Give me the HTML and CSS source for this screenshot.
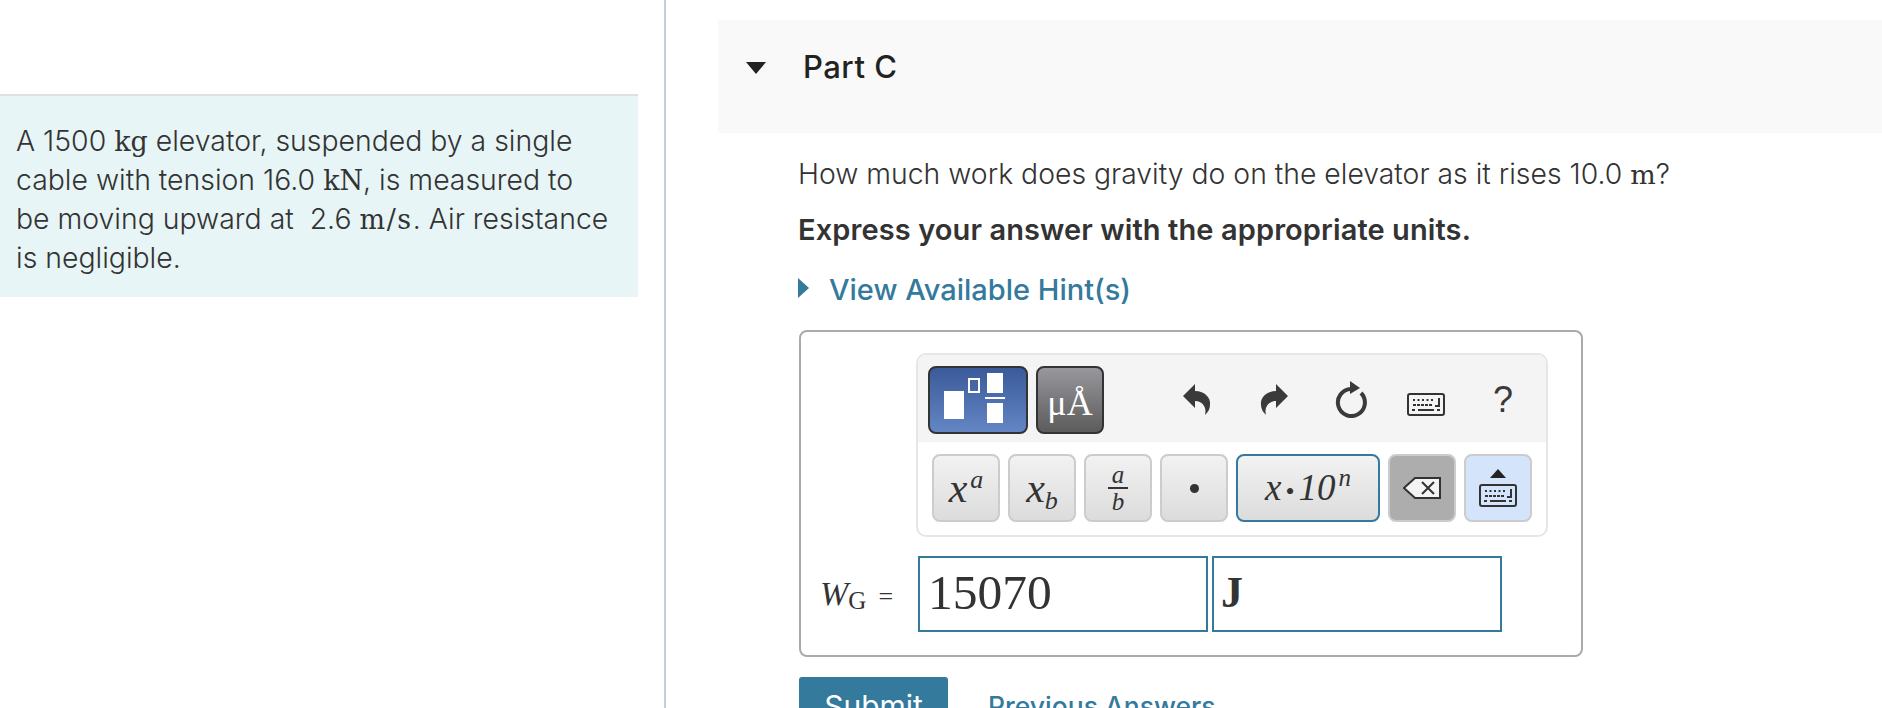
FILE: index.html
```html
<!DOCTYPE html>
<html lang="en">
<head>
    <meta charset="UTF-8">
    <title>Part C</title>
    <link rel="stylesheet" href="styles.css">
</head>
<body>
    <svg class="icon-defs" width="0" height="0">
        <symbol id="keyboard" viewBox="0 0 38 23">
            <rect x="1" y="1" width="36" height="21" rx="2" fill="none" stroke="#333" stroke-width="2"/>
            <path d="M6 7 H28" stroke="#333" stroke-width="2" stroke-dasharray="2 2.500"/>
            <path d="M6 12 H26" stroke="#333" stroke-width="2" stroke-dasharray="3 1"/>
            <path d="M32 5 V13 H28" fill="none" stroke="#333" stroke-width="2"/>
            <path d="M5 17 H8 M11 17 H27 M30 17 H33" stroke="#333" stroke-width="2"/>
        </symbol>
    </svg>

    <div class="page">
        <!-- Left intro column -->
        <aside class="intro">
            <div class="intro-box">
                A 1500 <span class="unit">kg</span> elevator, suspended by a single<br>
                cable with tension 16.0 <span class="unit">kN</span>, is measured to<br>
                be moving upward at &nbsp;2.6 <span class="unit unit-rate">m/s</span>. Air resistance<br>
                is negligible.
            </div>
        </aside>

        <main class="part">
            <div class="part-head">
                <span class="caret-down"></span>
                <h2>Part C</h2>
            </div>

            <div class="part-body">
                <p class="question">How much work does gravity do on the elevator as it rises 10.0 <span class="unit">m</span>?</p>
                <p class="instruction">Express your answer with the appropriate units.</p>
                <div class="hint"><span class="caret-right"></span>View Available Hint(s)</div>

                <div class="answer-box">
                    <div class="toolbar">
                        <div class="toolbar-top">
                            <div class="mode-btn mode-templates">
                                <svg width="96" height="64" viewBox="0 0 96 64">
                                    <rect x="14" y="23" width="20" height="28" fill="#fff"/>
                                    <rect x="39" y="11" width="10" height="13" fill="none" stroke="#fff" stroke-width="2"/>
                                    <rect x="57" y="5" width="16" height="20" fill="#fff"/>
                                    <rect x="55" y="29" width="20" height="2" fill="#fff"/>
                                    <rect x="57" y="35" width="16" height="20" fill="#fff"/>
                                </svg>
                            </div>
                            <div class="mode-btn mode-symbols">μÅ</div>
                            <div class="actions">
                                <svg class="undo" width="28" height="32" viewBox="0 0 28 32"><path d="M0 12 L12 0 V7 C22 7 28 14 27 21 C27 25 25 28 22 31 C24 24 20 17 12 17 V24 Z" fill="#3a3a3a"/></svg>
                                <svg class="redo" width="28" height="32" viewBox="0 0 28 32"><path d="M28 12 L16 0 V7 C6 7 0 14 1 21 C1 25 3 28 6 31 C4 24 8 17 16 17 V24 Z" fill="#3a3a3a"/></svg>
                                <svg class="reset" width="32" height="37" viewBox="0 0 32 37"><path d="M16 8 A13.500 13.500 0 1 0 26 12" fill="none" stroke="#3a3a3a" stroke-width="4"/><path d="M15 0 L25 7 L15 13 Z" fill="#3a3a3a"/></svg>
                                <svg class="kbd" width="38" height="23"><use href="#keyboard"/></svg>
                                <span class="help">?</span>
                            </div>
                        </div>
                        <div class="toolbar-keys">
                            <div class="key math"><span><i>x</i><sup><i>a</i></sup></span></div>
                            <div class="key math"><span><i>x</i><sub><i>b</i></sub></span></div>
                            <div class="key math fraction"><i>a</i><span class="bar"></span><i>b</i></div>
                            <div class="key dot"></div>
                            <div class="key key-wide math"><span><i>x</i><span class="mid">•</span><i>10</i><sup><i>n</i></sup></span></div>
                            <div class="key key-grey">
                                <svg width="38" height="22" viewBox="0 0 38 22"><path d="M12 1 H37 V21 H12 L1 11 Z" fill="#f4f4f4" stroke="#333" stroke-width="2"/><path d="M19 5 L31 17 M31 5 L19 17" stroke="#333" stroke-width="2"/></svg>
                            </div>
                            <div class="key key-blue">
                                <span class="caret-up"></span>
                                <svg class="kbd-small" width="38" height="23"><use href="#keyboard"/></svg>
                            </div>
                        </div>
                    </div>

                    <div class="answer-row">
                        <span class="answer-label"><i>W</i><sub>G</sub><span class="equals">=</span></span>
                        <div class="field">15070</div>
                        <div class="field field-unit">J</div>
                    </div>
                </div>

                <div class="submit-row">
                    <div class="submit">Submit</div>
                    <div class="previous">Previous Answers</div>
                </div>
            </div>
        </main>
    </div>
</body>
</html>
```

FILE: styles.css
```css
* {
    margin: 0;
    padding: 0;
    box-sizing: border-box;
}

html, body {
    height: 708px;
    overflow: hidden;
}

body {
    font-family: Inter, "Noto Sans", sans-serif;
    color: #333;
    background: #fff;
}

.icon-defs {
    position: absolute;
}

.page {
    display: flex;
    height: 708px;
}

.unit {
    font-family: "DejaVu Serif", "Liberation Serif", serif;
    font-size: 0.95em;
}

.unit-rate {
    letter-spacing: 0.06em;
}

/* Left column */
.intro {
    width: 666px;
    flex-shrink: 0;
    padding-top: 94px;
    border-right: 2px solid #c3cfe0;
}

.intro-box {
    width: 638px;
    height: 203px;
    background: #e7f5f6;
    border-top: 2px solid #dde1e3;
    padding: 26px 16px 0;
    font-size: 28.400px;
    font-weight: 300;
    line-height: 38px;
    white-space: nowrap;
    color: #333;
}

/* Right column */
.part {
    flex: 1;
    padding-top: 20px;
    padding-left: 52px;
}

.part-head {
    display: flex;
    align-items: flex-start;
    height: 113px;
    background: #f9f9f9;
    padding: 30px 0 0 28px;
}

.part-head h2 {
    font-size: 31px;
    line-height: 34px;
    font-weight: 500;
    letter-spacing: 0.5px;
    color: #222;
    margin-left: 37px;
}

.caret-down {
    width: 0;
    height: 0;
    margin-top: 12px;
    border-left: 10px solid transparent;
    border-right: 10px solid transparent;
    border-top: 12px solid #222;
}

.part-body {
    padding: 24px 0 0 81px;
}

.question {
    font-size: 28.350px;
    font-weight: 300;
    line-height: 34px;
    margin-left: -1px;
}

.instruction {
    font-size: 29px;
    line-height: 34px;
    font-weight: 600;
    letter-spacing: 0.1px;
    margin-top: 21px;
    margin-left: -1px;
}

.hint {
    display: flex;
    align-items: center;
    font-size: 29px;
    line-height: 34px;
    font-weight: 500;
    color: #337a9c;
    margin-top: 26px;
    margin-left: -1px;
}

.caret-right {
    width: 0;
    height: 0;
    margin-right: 20px;
    margin-bottom: 4px;
    border-top: 10px solid transparent;
    border-bottom: 10px solid transparent;
    border-left: 11px solid #337a9c;
}

.answer-box {
    width: 784px;
    height: 327px;
    margin-top: 23px;
    border: 2px solid #aaa;
    border-radius: 8px;
    padding: 21px 32px 0 115px;
}

.toolbar {
    width: 632px;
    height: 184px;
    border: 2px solid #e6e6e6;
    border-radius: 10px;
    overflow: hidden;
}

.toolbar-top {
    display: flex;
    align-items: center;
    height: 87px;
    background: #f4f4f4;
    padding: 2px 0 0 10px;
}

.mode-btn {
    height: 68px;
    border: 2px solid #333;
    border-radius: 8px;
    display: flex;
    align-items: center;
    justify-content: center;
    color: #fff;
}

.mode-templates {
    width: 100px;
    background: linear-gradient(#3a5a9a, #6486c4);
}

.mode-symbols {
    width: 68px;
    margin-left: 8px;
    background: linear-gradient(#97979d, #5c5c5c);
    font-family: "Liberation Serif", serif;
    font-size: 36px;
    padding-top: 6px;
}

.actions {
    flex: 1;
    display: flex;
    align-items: center;
    padding-left: 79px;
}

.undo { margin-right: 49px; }
.redo { margin-right: 47px; }
.reset { margin-right: 40px; }
.kbd { margin-right: 48px; margin-top: 9px; }

.help {
    font-family: "Liberation Sans", sans-serif;
    font-size: 36px;
    line-height: 40px;
    color: #3a3a3a;
}

.toolbar-keys {
    display: flex;
    gap: 8px;
    padding: 12px 0 0 14px;
    background: #fff;
}

.key {
    width: 68px;
    height: 68px;
    flex-shrink: 0;
    border: 2px solid #ccc;
    border-radius: 8px;
    background: linear-gradient(#f2f2f2, #dcdcdc);
    display: flex;
    align-items: center;
    justify-content: center;
}

.math {
    font-family: "Liberation Serif", serif;
    font-size: 42px;
    line-height: 50px;
    color: #333;
}

.math sup, .math sub {
    font-size: 26px;
    line-height: 0;
}

.math sup {
    vertical-align: 14px;
    margin-left: 3px;
}

.math sub {
    vertical-align: -7px;
}

.fraction {
    flex-direction: column;
    font-size: 25px;
    line-height: 25px;
}

.fraction .bar {
    width: 20px;
    height: 2px;
    background: #333;
}

.dot::after {
    content: '';
    width: 9px;
    height: 9px;
    border-radius: 50%;
    background: #333;
}

.key-wide {
    width: 144px;
    border-color: #337a9c;
    font-size: 37px;
    padding-top: 4px;
}

.key-wide sup {
    font-size: 25px;
}

.mid {
    font-size: 26px;
    margin: 0 4px;
}

.key-grey {
    background: #adadad;
}

.key-blue {
    flex-direction: column;
    background: #d3e4fb;
    gap: 6px;
}

.caret-up {
    width: 0;
    height: 0;
    border-left: 8px solid transparent;
    border-right: 8px solid transparent;
    border-bottom: 9px solid #222;
}

.answer-row {
    display: flex;
    align-items: center;
    margin-top: 19px;
    margin-left: -115px;
    padding-left: 19px;
}

.answer-label {
    font-family: "Liberation Serif", serif;
    font-size: 34px;
    width: 98px;
    flex-shrink: 0;
    color: #333;
}

.answer-label sub {
    font-size: 25px;
    line-height: 0;
    vertical-align: -4px;
}

.equals {
    font-size: 26px;
    margin-left: 12px;
}

.field {
    width: 290px;
    height: 76px;
    flex-shrink: 0;
    border: 2px solid #337a9c;
    font-family: "Liberation Serif", serif;
    font-size: 49.500px;
    line-height: 70px;
    padding-left: 8px;
    color: #333;
}

.field-unit {
    margin-left: 4px;
    padding-left: 7px;
    font-size: 44px;
    font-weight: 700;
}

.submit-row {
    display: flex;
    align-items: flex-start;
    margin-top: 20px;
}

.submit {
    width: 149px;
    height: 60px;
    background: #337a9c;
    color: #fff;
    border-radius: 3px;
    font-size: 30px;
    line-height: 58px;
    text-align: center;
}

.previous {
    font-size: 26.500px;
    font-weight: 500;
    color: #337a9c;
    margin-left: 40px;
    line-height: 58px;
}
```
